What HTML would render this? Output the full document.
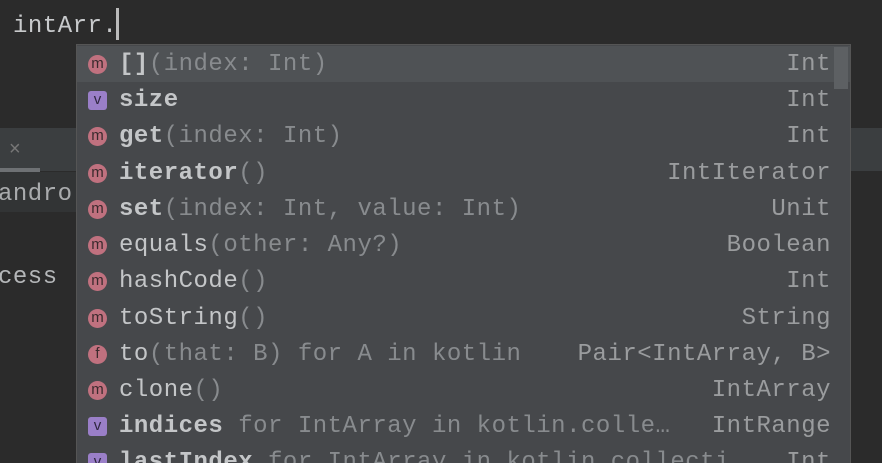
<!DOCTYPE html><html><head><style>
body{margin:0;width:882px;height:462px;overflow:hidden;background:#2b2b2b;position:relative;font-family:"Liberation Mono",monospace;}
.a{position:absolute}
.t{font-size:24px;letter-spacing:0.5px;white-space:pre;}
.pop{position:absolute;left:76px;top:44px;width:773px;height:418px;background:#46484b;border-left:1px solid #555;border-right:1px solid #555;border-top:1px solid #555;overflow:hidden}
.row{position:absolute;left:0;width:773px;height:36px;}
.ic{position:absolute;left:11px;top:9px;width:19px;height:19px;border-radius:50%;background:#c0717f;color:#3a2a2d;font:15px "Liberation Sans",sans-serif;text-align:center;line-height:17px}
.ic.v{border-radius:3px;background:#9a7fc8;color:#2f2740}
.n{position:absolute;left:42px;top:5px;color:#c4c6c8}
.n b{font-weight:bold}
.n i{font-style:normal;color:#888b8e}
.r{position:absolute;right:19px;top:5px;color:#9a9c9e}
</style></head><body>
<div class="a" style="left:0;top:0;width:882px;height:44px;background:#2b2b2b"></div>
<div class="a t" style="left:13px;top:13px;color:#c8cacc">intArr.</div>
<div class="a" style="left:116px;top:8px;width:3px;height:32px;background:#bbb"></div>
<div class="a" style="left:0;top:128px;width:882px;height:43px;background:#3b3e40"></div>
<div class="a" style="left:0;top:168px;width:40px;height:4px;background:#6e7174"></div>
<div class="a" style="left:9px;top:138px;color:#777;font:20px 'Liberation Sans',sans-serif">×</div>
<div class="a" style="left:0;top:172px;width:76px;height:40px;background:#323435"></div>
<div class="a t" style="left:-2px;top:181px;color:#a9abad">andro</div>
<div class="a t" style="left:-2px;top:264px;color:#b4b6b8">cess</div>
<div class="pop">
<div class="row" style="top:1px;background:#4f5255"><div class="ic">m</div><div class="n t"><b>[]</b><i>(index: Int)</i></div><div class="r t">Int</div></div>
<div class="row" style="top:37px"><div class="ic v">v</div><div class="n t"><b>size</b></div><div class="r t">Int</div></div>
<div class="row" style="top:73px"><div class="ic">m</div><div class="n t"><b>get</b><i>(index: Int)</i></div><div class="r t">Int</div></div>
<div class="row" style="top:110px"><div class="ic">m</div><div class="n t"><b>iterator</b><i>()</i></div><div class="r t">IntIterator</div></div>
<div class="row" style="top:146px"><div class="ic">m</div><div class="n t"><b>set</b><i>(index: Int, value: Int)</i></div><div class="r t">Unit</div></div>
<div class="row" style="top:182px"><div class="ic">m</div><div class="n t">equals<i>(other: Any?)</i></div><div class="r t">Boolean</div></div>
<div class="row" style="top:218px"><div class="ic">m</div><div class="n t">hashCode<i>()</i></div><div class="r t">Int</div></div>
<div class="row" style="top:255px"><div class="ic">m</div><div class="n t">toString<i>()</i></div><div class="r t">String</div></div>
<div class="row" style="top:291px"><div class="ic">f</div><div class="n t">to<i>(that: B) for A in kotlin</i></div><div class="r t">Pair&lt;IntArray, B&gt;</div></div>
<div class="row" style="top:327px"><div class="ic">m</div><div class="n t">clone<i>()</i></div><div class="r t">IntArray</div></div>
<div class="row" style="top:363px"><div class="ic v">v</div><div class="n t"><b>indices</b><i> for IntArray in kotlin.colle…</i></div><div class="r t">IntRange</div></div>
<div class="row" style="top:399px"><div class="ic v">v</div><div class="n t"><b>lastIndex</b><i> for IntArray in kotlin.collecti…</i></div><div class="r t">Int</div></div>
<div class="a" style="left:757px;top:2px;width:14px;height:42px;background:#5d6063"></div>
</div>
</body></html>
